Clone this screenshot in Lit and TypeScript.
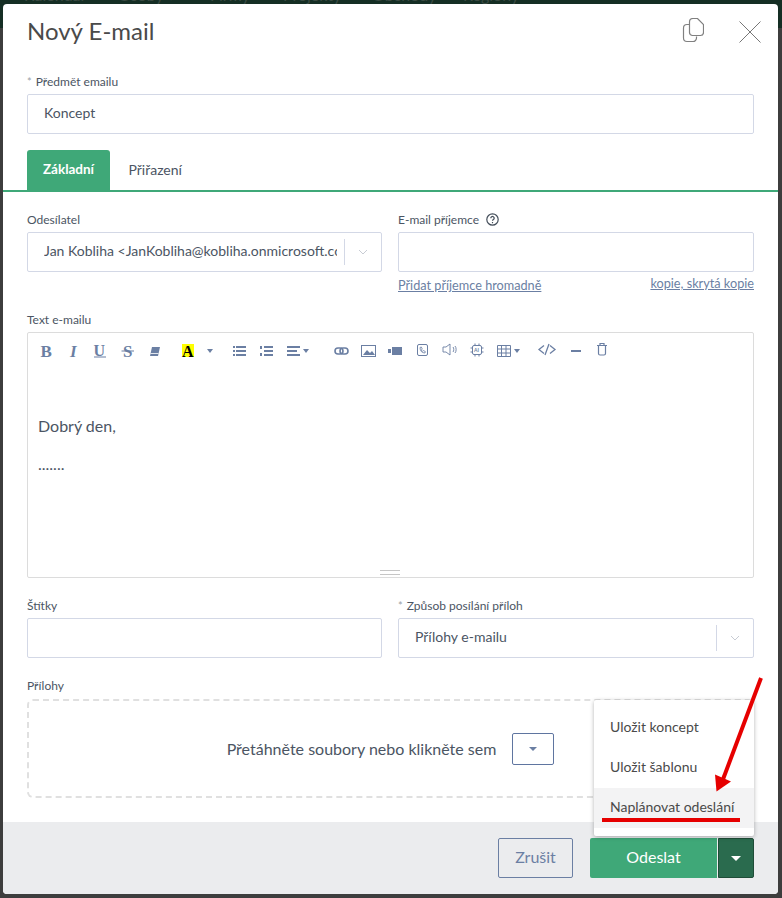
import { LitElement, html, css } from "lit";
import { customElement } from "lit/decorators.js";

const caret = (w = 8, h = 4) => html`<svg class="caret" width=${w} height=${h} viewBox="0 0 8 4"><path d="M0 0h8L4 4z" fill="currentColor"/></svg>`;

const NAV = [
  ["Kalendář", 24],
  ["Osoby ▾", 118],
  ["Firmy", 210],
  ["Projekty", 283],
  ["Obchody", 372],
  ["Regiony", 463],
] as const;

@customElement("app-root")
export class AppRoot extends LitElement {
  static styles = css`
    :host { display: block; width: 782px; height: 898px; overflow: hidden; position: relative; background: #3d3d3d; font-family: Lato, "Open Sans", sans-serif; color: #454f5b; }
    * { box-sizing: border-box; }
    .topbar { position: absolute; inset: 0 0 auto 0; height: 28px; background: #152e24; overflow: hidden; }
    .topbar span { position: absolute; top: -13px; font-size: 16px; line-height: 16px; color: #3a4a42; white-space: nowrap; }
    .wrap { position: absolute; inset: 4px 4px 4px 3px; }
    .modal { width: 775px; height: 890px; background: #fff; border-radius: 4px; overflow: hidden; display: flex; flex-direction: column; position: relative; }
    .head { height: 56px; padding: 12px 17px 0 24px; display: flex; justify-content: space-between; align-items: flex-start; }
    h1 { margin: 0; font-size: 24px; font-weight: 400; line-height: 30px; color: #4a4a4a; }
    .head-icons { display: flex; gap: 35px; margin-top: 2px; }
    .head-icons .x { margin-top: 3px; }
    .section { padding: 0 24px; }
    .label { display: block; font-size: 12px; line-height: 16px; height: 16px; color: #4b5563; white-space: nowrap; }
    .star { color: #9aa0a8; margin-right: 1px; font-size: 11px; }
    .input { height: 40px; border: 1px solid #d3d8e6; border-radius: 2px; background: #fff; font-size: 14px; display: flex; align-items: center; padding: 0 16px 3px; color: #4b5563; white-space: nowrap; overflow: hidden; }
    .subject { margin-top: 14px; }
    .subject .label { margin-bottom: 4px; }
    .tabs { margin-top: 16px; height: 42px; border-bottom: 2px solid #3fa878; display: flex; padding: 0 24px; }
    .tab { height: 40px; font-size: 14px; display: flex; align-items: center; padding: 0 18.5px 2px; border-radius: 3px 3px 0 0; color: #4b5563; }
    .tab.on { width: 83px; background: #3fa878; color: #fff; font-weight: 700; font-size: 13.5px; justify-content: center; padding: 0 0 2px; }
    .row { display: grid; grid-template-columns: 355px 356px; column-gap: 16px; }
    .row .label { margin-bottom: 4px; }
    .r1 { margin-top: 20px; }
    .select { padding: 0 0 0 16px; }
    .select .val { flex: 1; min-width: 0; overflow: hidden; white-space: nowrap; margin-right: 7px; padding-bottom: 3px; }
    .select .side { width: 37px; height: 26px; flex: none; border-left: 1px solid #d3d8e6; display: flex; align-items: center; justify-content: center; }
    .help { display: inline-flex; vertical-align: -2px; margin-left: 7px; }
    .links { display: flex; justify-content: space-between; font-size: 12.7px; line-height: 16px; color: #6b7fa3; margin-top: 5px; }
    .links span { text-decoration: underline; }
    .links .b { margin-top: -2px; }
    .editor-label { margin-top: 19px; margin-bottom: 4px; }
    .editor { height: 246px; border: 1px solid #dcdcdc; border-radius: 2px; position: relative; display: flex; flex-direction: column; }
    .toolbar { height: 30px; flex: none; display: block; }
    .body { padding: 0 10px; font-size: 16px; line-height: 20px; color: #4b5563; }
    .body p { margin: 0 0 18px; }
    .body p:first-child { margin-top: 53px; }
    .grip { position: absolute; left: 352px; bottom: 2px; width: 20px; height: 5px; border-top: 1px solid #c6c6c6; border-bottom: 1px solid #c6c6c6; }
    .r2 { margin-top: 20px; }
    .drop-label { margin-top: 20px; margin-bottom: 5px; }
    .drop { height: 99px; border: 2px dashed #e0e0e0; border-radius: 6px; display: flex; align-items: center; justify-content: center; gap: 16px; font-size: 16px; color: #4b5563; }
    .drop-btn { width: 42px; height: 32px; border: 1px solid #5f75a0; border-radius: 2px; display: flex; align-items: center; justify-content: center; color: #6b7fa3; }
    .footer { position: absolute; left: 0; right: 0; bottom: 0; height: 72px; background: #ebecee; display: flex; justify-content: flex-end; align-items: center; padding: 0 24px 0 0; }
    .btn { height: 40px; border-radius: 2px; display: flex; align-items: center; justify-content: center; font-size: 16px; padding-bottom: 3px; }
    .cancel { width: 75px; border: 1px solid #6b7fa3; color: #6b7fa3; margin-right: 17px; }
    .send { width: 127px; background: #3fa878; color: #fff; border-radius: 2px 0 0 2px; }
    .more { width: 36px; margin-left: 1px; background: #2a6b4e; border: 1px solid #1f4d38; color: #fff; border-radius: 0 2px 2px 0; padding-bottom: 0; }
    .menu { position: absolute; left: 591px; top: 696px; width: 160px; height: 136px; background: #fff; border-radius: 2px; box-shadow: 0 1px 4px rgba(0,0,0,.3); padding: 8px 0; font-size: 14px; color: #4a4a4a; }
    .menu div { height: 40px; display: flex; align-items: center; padding: 0 16px 4px; white-space: nowrap; }
    .menu .hover { background: #f3f3f4; }
    .mark { position: absolute; left: 0; top: 0; pointer-events: none; }
  `;

  render() {
    const c = "#6b7fa3";
    return html`
      <div class="topbar">${NAV.map(([t, x]) => html`<span style="left:${x}px">${t}</span>`)}</div>
      <div class="wrap">
        <div class="modal">
          <div class="head">
            <h1>Nový E-mail</h1>
            <div class="head-icons">
              <svg width="22" height="25" viewBox="0 0 22 25" fill="none" stroke="#808080" stroke-width="1.200"><path d="M7.500 6.500H5a3.500 3.500 0 0 0-3.500 3.500v10a3.500 3.500 0 0 0 3.500 3.500h6a3.500 3.500 0 0 0 3.500-3.500v-1.500"/><path d="M7.500 4a3.500 3.500 0 0 1 3.500-3.500h4.500l6 6v8a3 3 0 0 1-3 3h-8a3 3 0 0 1-3-3z"/></svg>
              <svg class="x" width="22" height="22" viewBox="0 0 22 22" stroke="#777" stroke-width="1"><path d="M.5.5l21 21M21.500.5l-21 21"/></svg>
            </div>
          </div>
          <div class="section subject">
            <span class="label"><span class="star">*</span> Předmět emailu</span>
            <div class="input">Koncept</div>
          </div>
          <div class="tabs"><div class="tab on">Základní</div><div class="tab">Přiřazení</div></div>
          <div class="section">
            <div class="row r1">
              <div>
                <span class="label">Odesílatel</span>
                <div class="input select"><span class="val">Jan Kobliha &lt;JanKobliha@kobliha.onmicrosoft.com&gt;</span><span class="side"><svg width="10" height="6" viewBox="0 0 10 6" fill="none" stroke="#c8ccd4"><path d="M1 1l4 4 4-4"/></svg></span></div>
              </div>
              <div>
                <span class="label">E-mail příjemce<span class="help"><svg width="13" height="13" viewBox="0 0 13 13" fill="none" stroke="#454f5b" stroke-width="1.200"><circle cx="6.500" cy="6.500" r="5.700"/><path d="M4.800 5.200a1.700 1.700 0 1 1 2.600 1.400c-.6.400-.9.700-.9 1.200"/><path d="M6.500 9v1.200"/></svg></span></span>
                <div class="input"></div>
                <div class="links"><span>Přidat příjemce hromadně</span><span class="b">kopie, skrytá kopie</span></div>
              </div>
            </div>
            <span class="label editor-label">Text e-mailu</span>
            <div class="editor">
              <svg class="toolbar" width="725" height="30" viewBox="0 0 725 30">
                <g font-family="Liberation Serif, serif" font-size="17" font-weight="700" fill="${c}">
                  <text x="12.500" y="24">B</text>
                  <text x="42" y="24" font-style="italic">I</text>
                  <text x="65.500" y="23" font-size="16">U</text>
                  <text x="95" y="24">S</text>
                </g>
                <path d="M66 24h12M93.500 18h12.500" stroke="${c}" stroke-width="1.200"/>
                <path d="M122 23l2-9h8l-2 9z" fill="${c}"/><path d="M122.500 20.500h8" stroke="#fff" stroke-width=".8"/>
                <rect x="154" y="11" width="12" height="13" fill="#ff0"/>
                <text x="154" y="23.500" font-family="Liberation Serif, serif" font-size="16" font-weight="700" fill="#000">A</text>
                <path d="M179 16h6l-3 4z" fill="${c}"/>
                <path d="M205 13h2v2h-2zM205 17h2v2h-2zM205 21h2v2h-2zM208 13h10v2h-10zM208 17h10v2h-10zM208 21h10v2h-10z" fill="${c}"/>
                <path d="M236 13h9v2h-9zM236 17h9v2h-9zM236 21h9v2h-9zM232 13h2v3h-2zM232 20h2v3h-2z" fill="${c}"/>
                <path d="M259 13h13v2h-13zM259 17h10v2h-10zM259 21h13v2h-13zM275 16h6l-3 4z" fill="${c}"/>
                <g fill="none" stroke="${c}" stroke-width="1.600"><rect x="307" y="15" width="8" height="6" rx="3"/><rect x="312" y="15" width="8" height="6" rx="3"/></g>
                <rect x="333.500" y="12.500" width="14" height="11" fill="none" stroke="${c}"/><path d="M335 22l4-5 3 3 2-2 3 4z" fill="${c}"/>
                <path d="M360 16h3v4h-3zM364 14h10v8h-10z" fill="${c}"/>
                <rect x="389.500" y="11.500" width="10" height="11" rx="1.500" fill="none" stroke="${c}"/><path d="M392 14.500c0 3.500 2 5.500 5 5.500l.3-1.500-2-1-1 1-1-1.500 1-1-1-2z" fill="none" stroke="${c}" stroke-width=".8"/>
                <path d="M415 14h3l4-3v11l-4-3h-3zM425 14c1 1 1 4 0 5M427 13c1.500 1.500 1.500 5.500 0 7" fill="none" stroke="${c}" stroke-width=".9"/>
                <rect x="444.500" y="12.500" width="9" height="9" rx="1.500" fill="none" stroke="${c}"/>
                <path d="M447 10.500v2M451 10.500v2M447 21.500v2M451 21.500v2M442.500 15h2M442.500 19h2M453.500 15h2M453.500 19h2" stroke="${c}"/>
                <text x="446" y="19" font-family="Lato" font-size="5" font-weight="700" fill="${c}">AI</text>
                <path d="M469.500 12.500h13v11h-13zM469.500 16h13M469.500 20h13M473.500 12.500v11M478 12.500v11" fill="none" stroke="${c}"/>
                <path d="M486 16h6l-3 4z" fill="${c}"/>
                <path d="M516 12.500l-5 4 5 4M522 12.500l5 4-5 4M521 11l-4 11" fill="none" stroke="${c}" stroke-width="1.300"/>
                <path d="M543 17h10v2h-10z" fill="${c}"/>
                <path d="M569 12.500h10M572 12.500V10.500h4v2M570.500 12.500v8a1.500 1.500 0 0 0 1.500 1.500h4a1.500 1.500 0 0 0 1.500-1.500v-8" fill="none" stroke="${c}" stroke-width="1.200"/>
              </svg>
              <div class="body"><p>Dobrý den,</p><p>.......</p></div>
              <div class="grip"></div>
            </div>
            <div class="row r2">
              <div><span class="label">Štítky</span><div class="input"></div></div>
              <div>
                <span class="label"><span class="star">*</span> Způsob posílání příloh</span>
                <div class="input select"><span class="val">Přílohy e-mailu</span><span class="side"><svg width="10" height="6" viewBox="0 0 10 6" fill="none" stroke="#c8ccd4"><path d="M1 1l4 4 4-4"/></svg></span></div>
              </div>
            </div>
            <span class="label drop-label">Přílohy</span>
            <div class="drop"><span>Přetáhněte soubory nebo klikněte sem</span><span class="drop-btn">${caret()}</span></div>
          </div>
          <div class="footer">
            <div class="btn cancel">Zrušit</div>
            <div class="btn send">Odeslat</div>
            <div class="btn more">${caret(10, 5)}</div>
          </div>
          <div class="menu">
            <div>Uložit koncept</div>
            <div>Uložit šablonu</div>
            <div class="hover">Naplánovat odeslání</div>
          </div>
        </div>
      </div>
      <svg class="mark" width="782" height="898" viewBox="0 0 782 898">
        <path d="M602 820h138" stroke="#e60000" stroke-width="4"/>
        <path d="M761 678L722 782" stroke="#e60000" stroke-width="4"/>
        <path d="M716.500 791.500l-1.500-17 16 7z" fill="#e60000"/>
      </svg>
    `;
  }
}
